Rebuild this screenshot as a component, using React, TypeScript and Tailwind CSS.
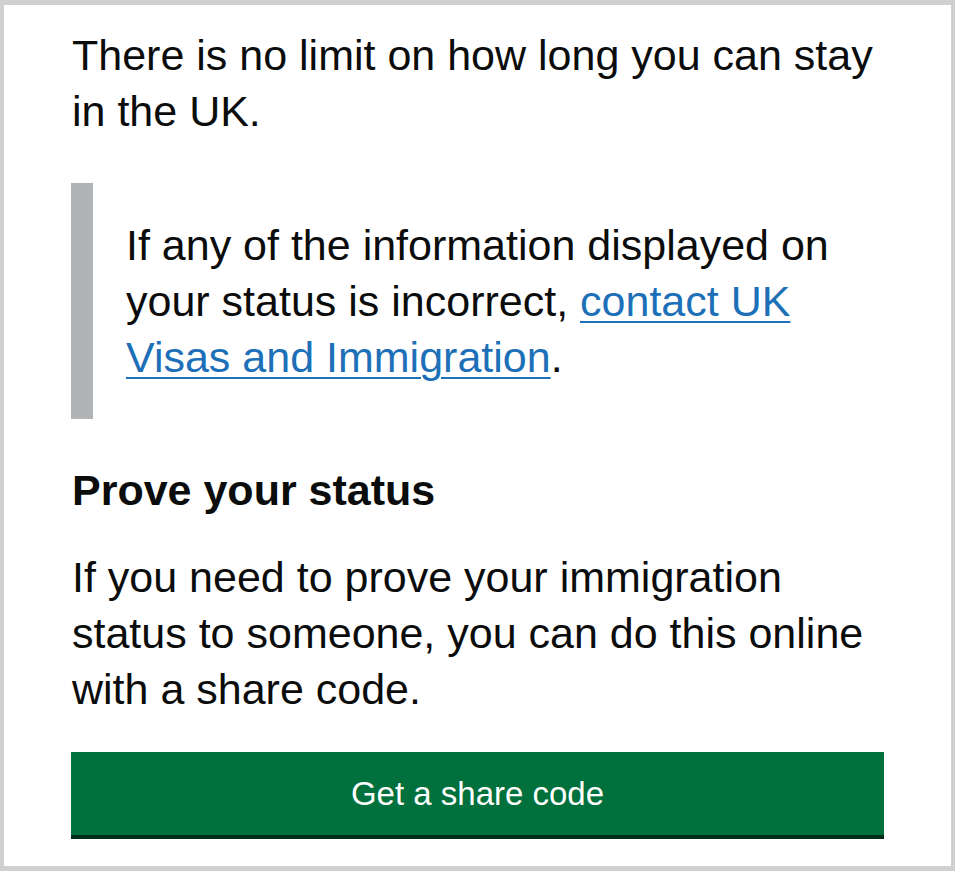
export default function App() {
  return (
    <div className="min-h-[871px] w-[955px] border-x-4 border-t-[5px] border-b-[5px] border-[#d0d0d0] bg-white font-['Liberation_Sans',Arial,sans-serif] text-[#0b0c0c]">
      <div className="px-[67px] pt-[22px] pb-[27px]">
        <p className="pl-px text-[43px] leading-[56px]">
          There is no limit on how long you can stay in the UK.
        </p>

        {/* inset text */}
        <div className="mt-[44px] border-l-[22px] border-[#b1b4b6] py-[34px] pl-[33px]">
          <p className="text-[43px] leading-[56px]">
            If any of the information displayed on your status is incorrect,{' '}
            <a
              href="#"
              className="text-[#1d70b8] underline decoration-2 underline-offset-[5px]"
            >
              contact UK Visas and Immigration
            </a>
            .
          </p>
        </div>

        <h2 className="mt-[43px] pl-px text-[43px] font-bold leading-[56px]">Prove your status</h2>

        <p className="mt-[31px] pl-px text-[43px] leading-[56px]">
          If you need to prove your immigration status to someone, you can do this online with a
          share code.
        </p>

        <button className="mt-[35px] flex h-[83px] w-full items-center justify-center bg-[#00703c] text-[33px] text-white shadow-[0_4px_0_#002d18]">
          Get a share code
        </button>
      </div>
    </div>
  );
}
